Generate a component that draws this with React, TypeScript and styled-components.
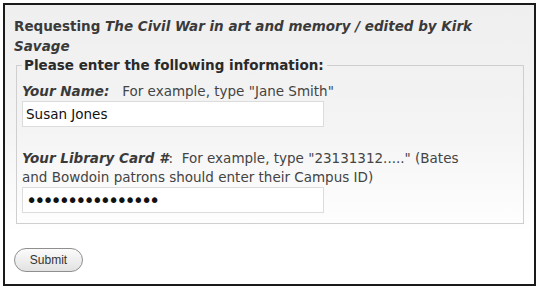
import { createGlobalStyle, styled } from "styled-components";

const GlobalStyle = createGlobalStyle`
  html, body {
    margin: 0;
    padding: 0;
    background: #ffffff;
  }
  body {
    font-family: "DejaVu Sans", Verdana, sans-serif;
    color: #333333;
  }
`;

const Page = styled.div`
  padding: 3px 7px 6px 3px;
`;

const RequestBox = styled.form`
  box-sizing: border-box;
  width: 533px;
  height: 283px;
  border: 2px solid #1a1a1a;
  background: linear-gradient(#efefef 0%, #f4f4f4 45%, #ffffff 82%);
  padding: 11px 10px 0 9px;
`;

const Heading = styled.div`
  font-size: 13.5px;
  font-weight: bold;
  line-height: 20px;
  color: #3a3a3a;
`;

const Title = styled.em`
  font-style: italic;
`;

const InfoFieldset = styled.fieldset`
  margin: 1px 0 0 2px;
  width: 508px;
  box-sizing: border-box;
  border: 1px solid #cfcfcf;
  padding: 0 6px 10px 5px;
`;

const Legend = styled.legend`
  font-size: 13.5px;
  font-weight: bold;
  line-height: 16px;
  color: #2a2a2a;
  padding: 0 3px 0 2px;
`;

const FieldLabel = styled.label<{ $gap: number }>`
  display: block;
  max-width: 452px;
  font-size: 13.5px;
  line-height: 19px;
  color: #444444;
  margin-top: ${({ $gap }) => $gap}px;
`;

const LabelName = styled.strong`
  font-style: italic;
  font-weight: bold;
  color: #3a3a3a;
`;

const TextInput = styled.input<{ $dots?: boolean }>`
  box-sizing: border-box;
  display: block;
  width: 302px;
  height: 26px;
  margin-top: 0;
  border: 1px solid #dcdcdc;
  background: #ffffff;
  padding: 0 3px;
  font-family: "DejaVu Sans", Verdana, sans-serif;
  font-size: ${({ $dots }) => ($dots ? "19px" : "13.5px")};
  letter-spacing: ${({ $dots }) => ($dots ? "-3px" : "0")};
  color: #111111;
  outline: none;
`;

const SubmitRow = styled.div`
  margin-top: 24px;
`;

const SubmitButton = styled.button`
  width: 69px;
  height: 24px;
  border: 1px solid #8f8f8f;
  border-radius: 12px;
  background: linear-gradient(#fbfbfb, #e2e2e2);
  font-family: "Liberation Sans", Arial, sans-serif;
  font-size: 12px;
  color: #333333;
  padding: 0;
`;

export default function App() {
  return (
    <>
      <GlobalStyle />
      <Page>
        <RequestBox onSubmit={(e) => e.preventDefault()}>
          <Heading>
            Requesting <Title>The Civil War in art and memory / edited by Kirk Savage</Title>
          </Heading>
          <InfoFieldset>
            <Legend>Please enter the following information:</Legend>
            <FieldLabel htmlFor="name" $gap={9}>
              <LabelName>Your Name:</LabelName>&nbsp;&nbsp; For example, type "Jane Smith"
            </FieldLabel>
            <TextInput id="name" type="text" defaultValue="Susan Jones" />
            <FieldLabel htmlFor="card" $gap={22}>
              <LabelName>Your Library Card #</LabelName>:&nbsp; For example, type "23131312....." (Bates
              and Bowdoin patrons should enter their Campus ID)
            </FieldLabel>
            <TextInput id="card" type="password" $dots defaultValue="1234567890123456" />
          </InfoFieldset>
          <SubmitRow>
            <SubmitButton type="submit">Submit</SubmitButton>
          </SubmitRow>
        </RequestBox>
      </Page>
    </>
  );
}
